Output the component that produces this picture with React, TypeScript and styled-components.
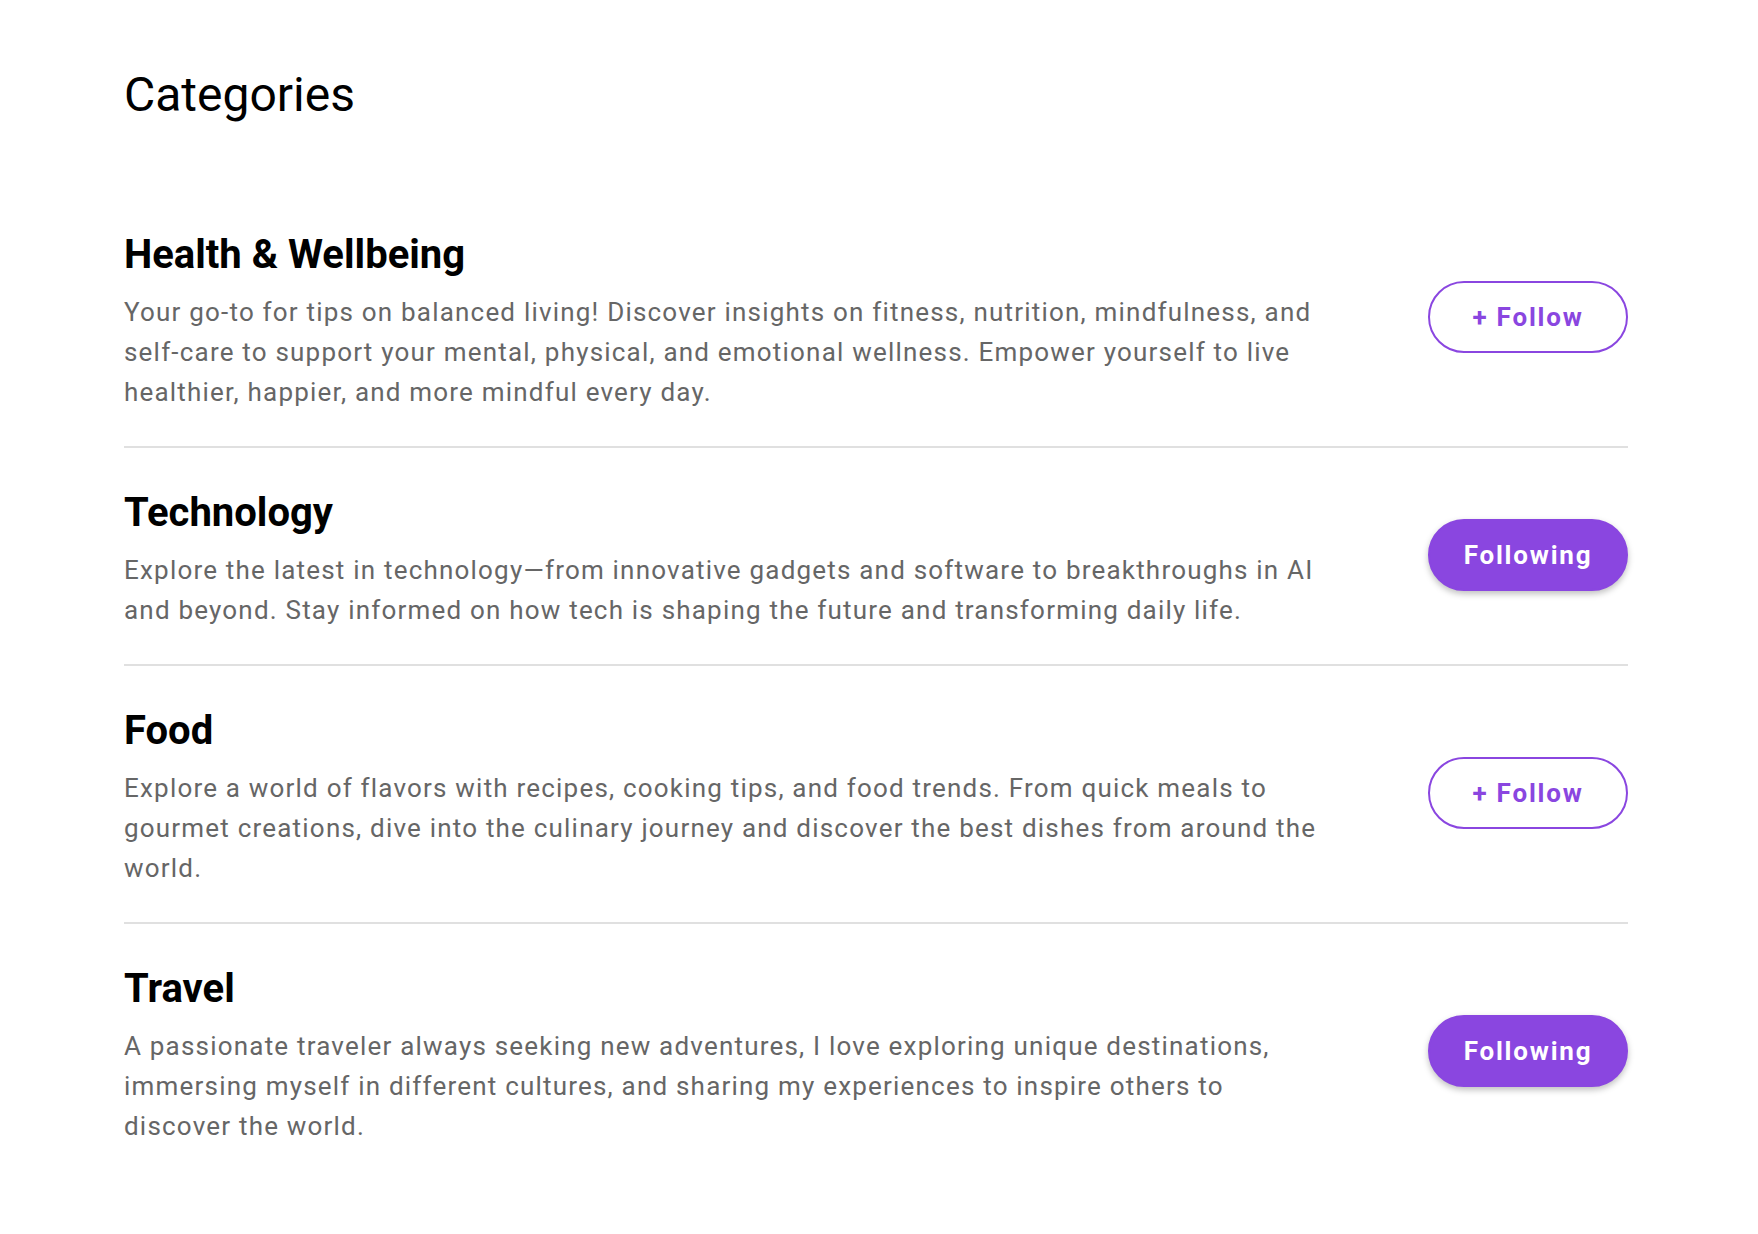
import React, { useState } from "react";
import styled, { createGlobalStyle } from "styled-components";

const categories = [
	{
		key: "health",
		title: "Health & Wellbeing",
		text: "Your go-to for tips on balanced living! Discover insights on fitness, nutrition, mindfulness, and self-care to support your mental, physical, and emotional wellness. Empower yourself to live healthier, happier, and more mindful every day.",
		following: false,
	},
	{
		key: "tech",
		title: "Technology",
		text: "Explore the latest in technology\u2014from innovative gadgets and software to breakthroughs in AI and beyond. Stay informed on how tech is shaping the future and transforming daily life.",
		following: true,
	},
	{
		key: "food",
		title: "Food",
		text: "Explore a world of flavors with recipes, cooking tips, and food trends. From quick meals to gourmet creations, dive into the culinary journey and discover the best dishes from around the world.",
		following: false,
	},
	{
		key: "travel",
		title: "Travel",
		text: "A passionate traveler always seeking new adventures, I love exploring unique destinations, immersing myself in different cultures, and sharing my experiences to inspire others to discover the world.",
		following: true,
	},
];

export default function App() {
	const [follows, setFollows] = useState<Record<string, boolean>>(
		Object.fromEntries(categories.map((c) => [c.key, c.following]))
	);

	const toggle = (key: string) => setFollows((f) => ({ ...f, [key]: !f[key] }));

	return (
		<>
			<GlobalStyle />
			<Page>
				<Title>Categories</Title>
				<List>
					{categories.map((c) => (
						<Row key={c.key}>
							<Info>
								<Heading>{c.title}</Heading>
								<Description>{c.text}</Description>
							</Info>
							<FollowButton $active={follows[c.key]} onClick={() => toggle(c.key)}>
								{follows[c.key] ? "Following" : "+ Follow"}
							</FollowButton>
						</Row>
					))}
				</List>
			</Page>
		</>
	);
}

const GlobalStyle = createGlobalStyle`
	body {
		margin: 0;
		background: #ffffff;
		font-family: Roboto, "Liberation Sans", sans-serif;
	}
`;

const Page = styled.div`
	width: 1504px;
	padding: 67px 0 40px 124px;
`;

const Title = styled.h1`
	margin: 0 0 67px;
	font-size: 48px;
	line-height: 56px;
	font-weight: 400;
	color: #000;
`;

const List = styled.div`
	display: flex;
	flex-direction: column;
`;

const Row = styled.div`
	display: flex;
	align-items: center;
	justify-content: space-between;
	padding: 32px 0 34px;
	border-bottom: 2px solid #e0e0e0;

	&:last-child {
		border-bottom: none;
	}
`;

const Info = styled.div`
	max-width: 1200px;
`;

const Heading = styled.h2`
	margin: 9px 0 13px;
	font-size: 40px;
	line-height: 48px;
	font-weight: 700;
	color: #000;
`;

const Description = styled.p`
	margin: 0;
	font-size: 26px;
	line-height: 40px;
	letter-spacing: 1.2px;
	color: #666666;
`;

const FollowButton = styled.button<{ $active: boolean }>`
	flex-shrink: 0;
	width: 200px;
	height: 72px;
	border-radius: 36px;
	border: 2px solid #8a46e0;
	background: ${(p) => (p.$active ? "#8a46e0" : "#ffffff")};
	color: ${(p) => (p.$active ? "#ffffff" : "#8a46e0")};
	box-shadow: ${(p) => (p.$active ? "0 3px 6px rgba(0, 0, 0, 0.25)" : "none")};
	font-family: Roboto, "Liberation Sans", sans-serif;
	font-size: 26px;
	font-weight: 700;
	letter-spacing: 1.8px;
	cursor: pointer;
`;
